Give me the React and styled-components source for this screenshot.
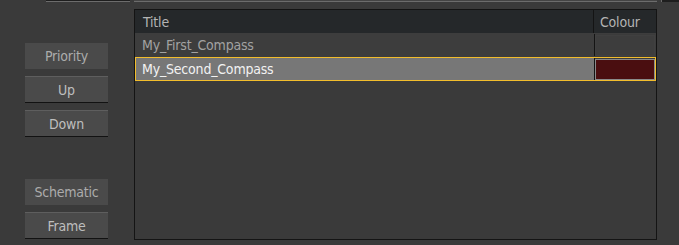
import styled, { createGlobalStyle } from "styled-components";

const GlobalStyle = createGlobalStyle`
    html, body {
        margin: 0;
        padding: 0;
        background: #3a3a3a;
    }
    body {
        font-family: "DejaVu Sans Condensed", "DejaVu Sans", sans-serif;
        font-size: 14px;
        letter-spacing: -0.2px;
    }
`;

const compasses = [
    { name: "My_First_Compass", colour: null },
    { name: "My_Second_Compass", colour: "#4a0e10", selected: true },
];

export default function App() {
    return (
        <Page>
            <GlobalStyle />
            <TopStrip>
                <Cut $left={46} $width={84} $dark />
                <Cut $left={4} $width={523} />
                <Cut $left={4} $grow $dark $edge />
            </TopStrip>
            <Main>
                <Side>
                    <Group>
                        <Button $flat>Priority</Button>
                        <Button>Up</Button>
                        <Button>Down</Button>
                    </Group>
                    <Group $top={42}>
                        <Button $flat>Schematic</Button>
                        <Button>Frame</Button>
                    </Group>
                </Side>
                <Table>
                    <Header>
                        <HeadCell>Title</HeadCell>
                        <HeadCell $divider>Colour</HeadCell>
                    </Header>
                    {compasses.map((c) => (
                        <Row key={c.name} $selected={c.selected}>
                            <NameCell $selected={c.selected}>{c.name}</NameCell>
                            <ColourCell>
                                <Swatch $colour={c.colour} />
                            </ColourCell>
                        </Row>
                    ))}
                </Table>
            </Main>
        </Page>
    );
}

const Page = styled.div`
    width: 679px;
    height: 245px;
    background: #3a3a3a;
    display: flex;
    flex-direction: column;
    overflow: hidden;
`;

const TopStrip = styled.div`
    display: flex;
    height: 2px;
`;

const Cut = styled.div`
    margin-left: ${(p) => p.$left}px;
    width: ${(p) => (p.$width ? `${p.$width}px` : "auto")};
    flex: ${(p) => (p.$grow ? 1 : "none")};
    box-sizing: border-box;
    background: ${(p) => (p.$dark ? "#1e1e1e" : "#444444")};
    border-bottom: ${(p) => (p.$edge ? "none" : "1px solid #6c6c6c")};
    border-left: ${(p) => (p.$edge ? "1px solid #6a6a6a" : "none")};
`;

const Main = styled.div`
    display: flex;
    align-items: flex-start;
    padding-top: 7px;
`;

const Side = styled.div`
    margin-left: 25px;
    width: 83px;
    padding-top: 34px;
    display: flex;
    flex-direction: column;
`;

const Group = styled.div`
    display: flex;
    flex-direction: column;
    gap: 7px;
    margin-top: ${(p) => p.$top || 0}px;
`;

const Button = styled.div`
    box-sizing: border-box;
    height: ${(p) => (p.$flat ? 26 : 27)}px;
    background: #4a4a4a;
    border-top: ${(p) => (p.$flat ? "none" : "1px solid #5e5e5e")};
    border-bottom: ${(p) => (p.$flat ? "none" : "1px solid #121212")};
    color: ${(p) => (p.$flat ? "#acacac" : "#bebebe")};
    display: flex;
    align-items: center;
    justify-content: center;
`;

const Table = styled.div`
    margin-left: 26px;
    width: 523px;
    height: 231px;
    box-sizing: border-box;
    border: 1px solid #141414;
    background: #3a3a3a;
`;

const Header = styled.div`
    display: grid;
    grid-template-columns: 458px 1fr;
    height: 23px;
    background: #25282a;
`;

const HeadCell = styled.div`
    display: flex;
    align-items: center;
    padding-left: ${(p) => (p.$divider ? 6 : 8)}px;
    border-left: ${(p) => (p.$divider ? "1px solid #141414" : "none")};
    color: #b4b4b4;
`;

const Row = styled.div`
    display: grid;
    grid-template-columns: 458px 1fr;
    height: 24px;
    box-sizing: border-box;
    background: ${(p) => (p.$selected ? "#777777" : "#3d3d3d")};
    border: 1px solid ${(p) => (p.$selected ? "#f2bd2c" : "transparent")};
`;

const NameCell = styled.div`
    display: flex;
    align-items: center;
    padding-left: 7px;
    color: ${(p) => (p.$selected ? "#f2f2f2" : "#a2a2a2")};
    margin-left: -1px;
`;

const ColourCell = styled.div`
    display: flex;
    align-items: stretch;
    border-left: 1px solid #141414;
    background: #3b3b3b;
    padding: 1px 0 0 0;
`;

const Swatch = styled.div`
    flex: 1;
    box-sizing: border-box;
    background: ${(p) => p.$colour || "#3d3d3d"};
    border: 1px solid ${(p) => (p.$colour ? "#8a8a8a" : "#404040")};
`;
